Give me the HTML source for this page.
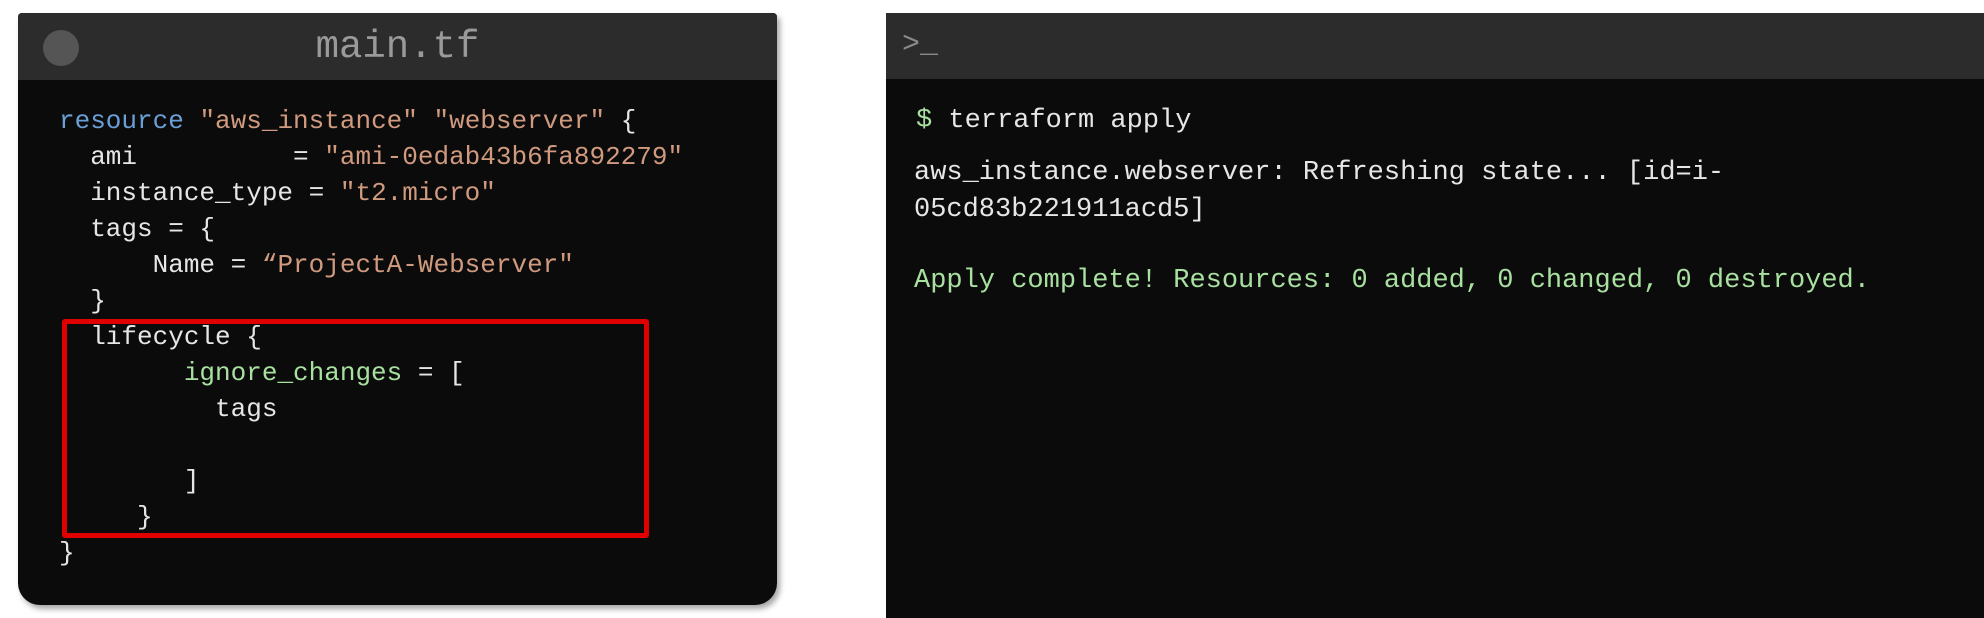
<!DOCTYPE html><html><head><style>
body{margin:0;width:1984px;height:618px;background:#fff;position:relative;overflow:hidden;font-family:"Liberation Mono",monospace}
.p{position:absolute;background:#0b0b0b}
.l{left:18px;top:13px;width:759px;height:592px;border-radius:4px 4px 22px 22px;box-shadow:3px 4px 6px rgba(0,0,0,.35);overflow:hidden}
.h{position:absolute;left:0;top:0;right:0;background:#2c2c2c}
.t{position:absolute;white-space:pre;font-size:26px;line-height:36px;color:#e6e6e6}
.b{color:#6a9fd8}.s{color:#d09a7e}.g{color:#a8e0a0}
</style></head><body>
<div class="p l"><div class="h" style="height:67px"></div>
<div style="position:absolute;left:25px;top:17px;width:36px;height:36px;border-radius:50%;background:#555"></div>
<div class="t" style="left:0;width:759px;text-align:center;top:12px;font-size:39px;line-height:44px;color:#9a9a9a">main.tf</div>
<div class="t" style="left:41px;top:90px"><span class="b">resource</span> <span class="s">"aws_instance"</span> <span class="s">"webserver"</span> {
  ami          = <span class="s">"ami-0edab43b6fa892279"</span>
  instance_type = <span class="s">"t2.micro"</span>
  tags = {
      Name = <span class="s">“ProjectA-Webserver"</span>
  }
  lifecycle {
        <span class="g">ignore_changes</span> = [
          tags

        ]
     }
}</div>
<div style="position:absolute;left:44px;top:306px;width:577px;height:209px;border:5px solid #e00000;border-radius:3px"></div>
</div>
<div class="p" style="left:886px;top:13px;right:0;bottom:0">
<div class="h" style="height:66px"></div>
<div class="t" style="left:16px;top:14px;font-size:30px;color:#8a8a8a">&gt;_</div>
<div class="t" style="left:30px;top:90px;font-size:27px;line-height:37px"><span class="g">$</span> terraform apply</div>
<div class="t" style="left:28px;top:142px;font-size:27px;line-height:37px">aws_instance.webserver: Refreshing state... [id=i-
05cd83b221911acd5]</div>
<div class="t g" style="left:28px;top:250px;font-size:27px;line-height:37px">Apply complete! Resources: 0 added, 0 changed, 0 destroyed.</div>
</div>
</body></html>
